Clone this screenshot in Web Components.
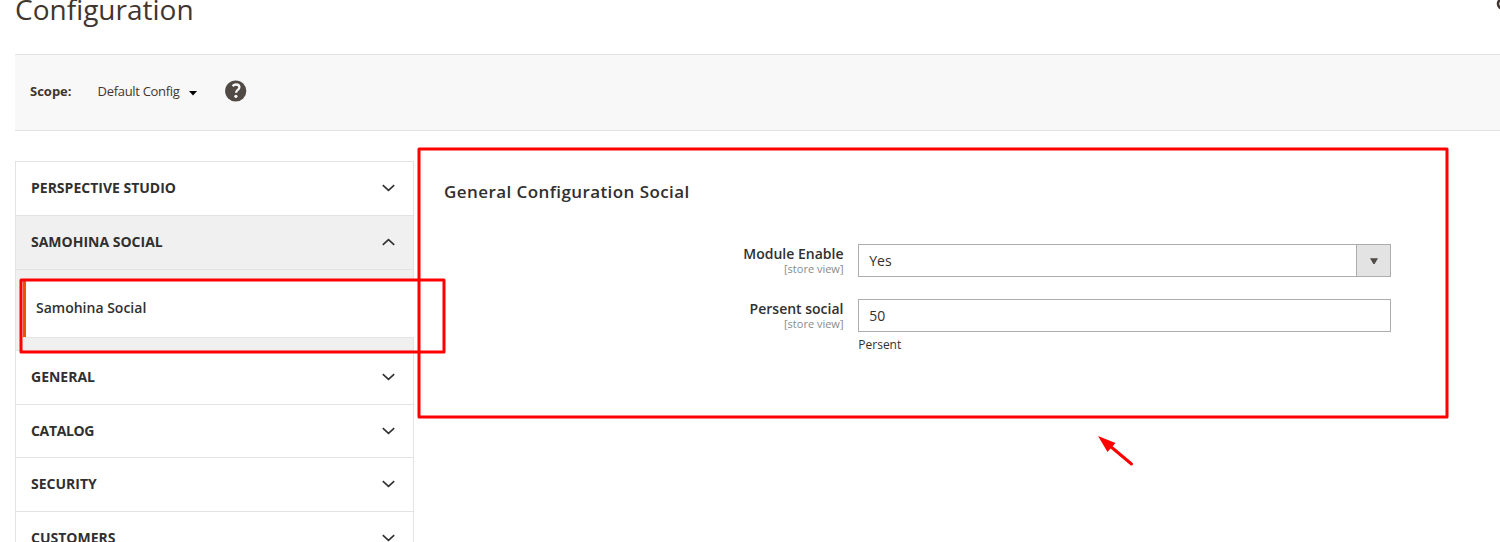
<!DOCTYPE html>
<html lang="en">
<head>
<meta charset="utf-8">
<title>Configuration</title>
<style>
html,body{margin:0;height:542px;overflow:hidden;background:#fff}
body{font-family:"Open Sans",sans-serif;color:#303030}
</style>
</head>
<body>
<config-page></config-page>
<script>
const define = (name, html) => {
  const t = document.createElement('template');
  t.innerHTML = html;
  customElements.define(name, class extends HTMLElement {
    constructor() {
      super();
      this.attachShadow({mode: 'open'}).append(t.content.cloneNode(true));
    }
  });
};

define('page-heading', `
<style>
:host{display:flex;justify-content:space-between;height:54px;padding-left:15px;overflow:hidden}
h1{margin:-10px 0 0;font-size:28px;line-height:38px;font-weight:400;color:#41362f;height:38px;white-space:nowrap}
svg{display:block;flex:none}
</style>
<h1><slot></slot></h1>
<svg width="4" height="12" viewBox="0 0 4 12"><circle cx="7" cy="3.8" r="5" fill="none" stroke="#41362f" stroke-width="2.6"/></svg>`);

define('scope-bar', `
<style>
:host{display:flex;align-items:center;box-sizing:border-box;height:77px;margin-left:15px;padding:0 0 3px 15px;background:#f8f8f8;border:solid #e3e3e3;border-width:1px 0;font-size:13px;line-height:18px;color:#41362f;white-space:nowrap}
b{font-weight:700;width:67.5px}
.v{width:91px;letter-spacing:-.3px}
svg{display:block}
.help{margin-left:28px}
</style>
<b><slot name="label"></slot></b><span class="v"><slot></slot></span>
<svg width="8" height="5" viewBox="0 0 8 5" style="margin-top:4px"><path d="M0 0h8L4 4.6z" fill="#000"/></svg>
<svg class="help" width="22" height="22" viewBox="0 0 22 22"><circle cx="10.7" cy="11" r="10.6" fill="#514943"/><path d="M7.6 6.1C8.7 4.9 9.8 4.5 11.1 4.5c2 0 3.3 1 3.3 2.7 0 1.3-.7 2-1.9 2.9-1 .8-1.4 1.3-1.4 2.7" fill="none" stroke="#f8f8f8" stroke-width="2.3"/><circle cx="10.9" cy="16.3" r="1.6" fill="#f8f8f8"/></svg>`);

define('nav-group', `
<style>
:host{display:flex;justify-content:space-between;align-items:flex-start;box-sizing:border-box;height:var(--h,54px);padding:16px 18px 0 15px;border-bottom:1px solid #e3e3e3;font-size:14px;line-height:19px;font-weight:700;background:#fff;white-space:nowrap}
:host([open]){background:#f0f0f0}
:host([open]) svg{transform:rotate(180deg)}
svg{display:block;margin-top:6px}
</style>
<slot></slot><svg width="13" height="8" viewBox="0 0 13 8"><path d="M.8 1.2L6.5 6.4l5.7-5.2" fill="none" stroke="#303030" stroke-width="1.6"/></svg>`);

define('nav-item', `
<style>
:host{display:block;box-sizing:border-box;height:81px;padding:11px 0 12px 7px;background:#f0f0f0;border-bottom:1px solid #e3e3e3}
div{box-sizing:border-box;height:57px;box-shadow:inset 3px 0 #eb5202;border-bottom:1px solid #e3e3e3;background:#fff;padding:17px 0 0 13px;margin-right:-1px;font-size:14px;line-height:19px;font-weight:600;white-space:nowrap}
</style>
<div><slot></slot></div>`);

define('config-nav', `
<style>:host{display:block;box-sizing:border-box;width:399px;border:1px solid #e3e3e3;flex:none}</style>
<slot></slot>`);

define('config-field', `
<style>
:host{display:grid;grid-template-columns:399.5px 533px;column-gap:14.5px;height:55px;white-space:nowrap}
.l{text-align:right;font-size:14px;line-height:19px;font-weight:600}
small{display:block;font-size:11px;line-height:12px;font-weight:400;color:#8a8a8a}
.box{display:flex;justify-content:space-between;box-sizing:border-box;height:33px;border:1px solid #adadad;font-size:14px;line-height:32px;padding-left:10.3px}
.note{font-size:12px;line-height:16px;margin-top:5px;padding-left:.3px}
.caret{display:none;width:33px;border-left:1px solid #adadad;background:#e3e3e3;align-items:center;justify-content:center}
:host([select]) .caret{display:flex}
</style>
<div class="l"><slot name="label"></slot><small>[store view]</small></div>
<div><div class="box"><slot></slot><span class="caret"><svg width="8" height="6" viewBox="0 0 8 6"><path d="M0 .2h8L4.6 6H3.4z" fill="#514943"/></svg></span></div>
<div class="note"><slot name="note"></slot></div></div>`);

define('config-section', `
<style>
:host{display:block;padding:19px 0 0 30px}
h2{margin:0 0 41px;font-size:17px;line-height:23px;font-weight:600;letter-spacing:.42px;white-space:nowrap}
</style>
<h2><slot name="title"></slot></h2><slot></slot>`);

define('markup-overlay', `
<style>:host{position:absolute;left:0;top:0;pointer-events:none}svg{display:block}</style>
<svg width="1500" height="542" viewBox="0 0 1500 542"><g fill="none" stroke="#f00" stroke-width="3" stroke-linejoin="round"><rect x="21" y="280" width="423" height="72"/><rect x="419" y="149" width="1028" height="268"/><path d="M1110 446l21.5 18" stroke-linecap="round"/></g><path d="M1098 436l17.5 7-8 9z" fill="#f00"/></svg>`);

define('config-page', `
<style>
:host{display:block;height:542px;overflow:hidden}
main{display:flex;padding:30px 0 0 15px}
</style>
<page-heading>Configuration</page-heading>
<scope-bar><span slot="label">Scope:</span>Default Config</scope-bar>
<main>
<config-nav>
<nav-group>PERSPECTIVE STUDIO</nav-group>
<nav-group open>SAMOHINA SOCIAL</nav-group>
<nav-item>Samohina Social</nav-item>
<nav-group>GENERAL</nav-group>
<nav-group style="--h:53px;letter-spacing:-.35px">CATALOG</nav-group>
<nav-group>SECURITY</nav-group>
<nav-group>CUSTOMERS</nav-group>
</config-nav>
<config-section><span slot="title">General Configuration Social</span>
<config-field select><span slot="label">Module Enable</span>Yes</config-field>
<config-field><span slot="label">Persent social</span>50<span slot="note">Persent</span></config-field>
</config-section>
</main>
<markup-overlay></markup-overlay>`);
</script>
</body>
</html>
